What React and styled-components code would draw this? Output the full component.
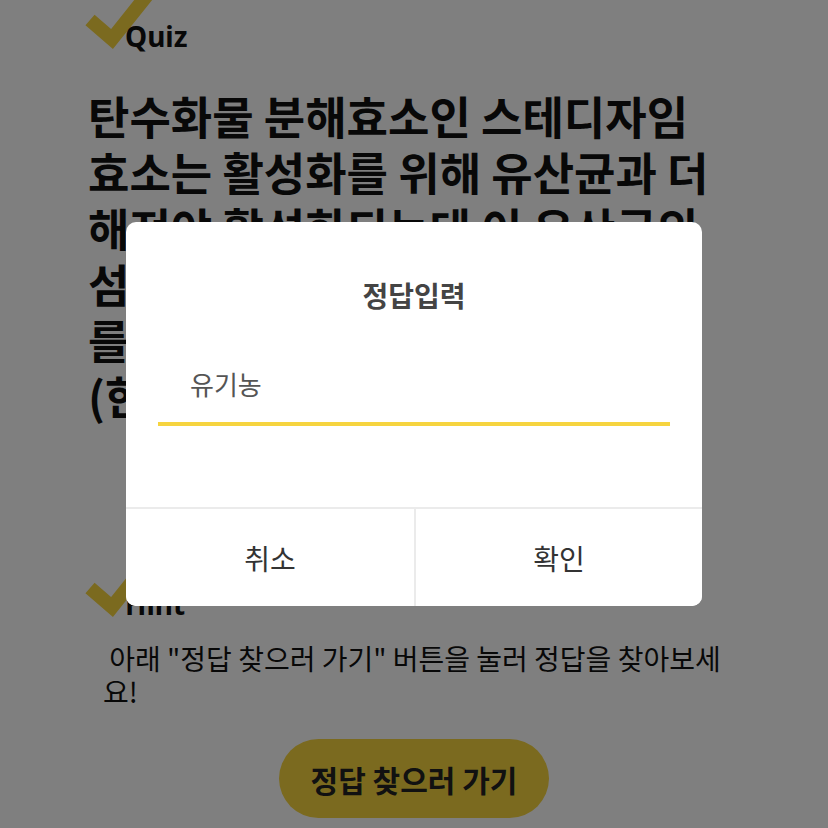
import React, { useState } from 'react';
import styled, { createGlobalStyle } from 'styled-components';

const GlobalStyle = createGlobalStyle`
  html, body {
    margin: 0;
    padding: 0;
    background: #ffffff;
    font-family: "Noto Sans", "Noto Sans CJK KR", sans-serif;
    overflow: hidden;
  }
`;

const yellow = '#f6d43f';

const Page = styled.div`
  width: 828px;
  height: 828px;
  overflow: hidden;
  position: relative;
  background: #fff;
`;

const Content = styled.div`
  padding: 0 103px 0 88px;
  display: flex;
  flex-direction: column;
`;

const SectionTitle = styled.div`
  position: relative;
  padding-left: 37px;
  margin-top: ${(p) => p.$top || 0}px;
  font-size: 28px;
  font-weight: 700;
  line-height: 32px;
  color: #111;

  span {
    position: relative;
  }
`;

const CheckMark = styled.svg`
  position: absolute;
  left: -3px;
  top: -42px;
  width: 72px;
  height: 72px;
  overflow: visible;
`;

const Question = styled.p`
  margin: 36px 0 0;
  font-family: "Noto Sans CJK KR", sans-serif;
  font-size: 45px;
  font-weight: 700;
  line-height: 56px;
  color: #111;
  word-break: break-all;
`;

const Hint = styled.p`
  margin: 22px 0 0 15px;
  font-family: "Noto Sans CJK KR", sans-serif;
  font-size: 28px;
  line-height: 33px;
  color: #111;
  white-space: pre-wrap;
  word-break: break-all;
`;

const FindButton = styled.button`
  align-self: center;
  margin: 31px 0 0 15px;
  width: 270px;
  height: 79px;
  border: none;
  border-radius: 40px;
  background: ${yellow};
  font-family: "Noto Sans CJK KR", sans-serif;
  font-size: 30px;
  font-weight: 700;
  color: #222;
`;

const Overlay = styled.div`
  position: absolute;
  inset: 0;
  background: rgba(0, 0, 0, 0.5);
  display: flex;
  align-items: flex-start;
  justify-content: center;
  padding-top: 222px;
`;

const Dialog = styled.div`
  width: 576px;
  height: 384px;
  background: #fff;
  border-radius: 10px;
  display: flex;
  flex-direction: column;
  overflow: hidden;
`;

const DialogTitle = styled.div`
  margin-top: 54px;
  text-align: center;
  font-family: "Noto Sans CJK KR", sans-serif;
  font-size: 28px;
  font-weight: 700;
  color: #444;
  line-height: 38px;
`;

const AnswerInput = styled.input`
  margin: 52px 32px 0;
  padding: 0 0 20px 32px;
  border: none;
  border-bottom: 4px solid ${yellow};
  outline: none;
  font-family: "Noto Sans CJK KR", sans-serif;
  font-size: 26px;
  line-height: 36px;
  color: #555;
  background: transparent;
`;

const ButtonRow = styled.div`
  margin-top: auto;
  height: 97px;
  border-top: 2px solid #ebebeb;
  display: grid;
  grid-template-columns: 1fr 1fr;
`;

const DialogButton = styled.button`
  border: none;
  background: #fff;
  border-left: ${(p) => (p.$divider ? '2px solid #ebebeb' : 'none')};
  font-family: "Noto Sans CJK KR", sans-serif;
  font-size: 28px;
  color: #333;
`;

const Check = () => (
  <CheckMark viewBox="0 0 72 72">
    <polyline
      points="5,42 27,61 63,16"
      fill="none"
      stroke={yellow}
      strokeWidth="14"
    />
  </CheckMark>
);

export default function App() {
  const [answer, setAnswer] = useState('유기농');

  return (
    <Page>
      <GlobalStyle />
      <Content>
        <SectionTitle $top={20}>
          <Check />
          <span>Quiz</span>
        </SectionTitle>
        <Question>
          탄수화물 분해효소인 스테디자임효소는 활성화를 위해 유산균과 더해져야 활성화되는데 이 유산균의 섬유질 먹이인 이것을 분해한물질를 무엇이라 부르는지 맞혀보세요 (한글 3글자)
        </Question>
        <SectionTitle $top={164}>
          <Check />
          <span>Hint</span>
        </SectionTitle>
        <Hint>{' 아래 "정답 찾으러 가기" 버튼을 눌러 정답을 찾아보세요!'}</Hint>
        <FindButton>정답 찾으러 가기</FindButton>
      </Content>
      <Overlay>
        <Dialog>
          <DialogTitle>정답입력</DialogTitle>
          <AnswerInput value={answer} onChange={(e) => setAnswer(e.target.value)} />
          <ButtonRow>
            <DialogButton>취소</DialogButton>
            <DialogButton $divider>확인</DialogButton>
          </ButtonRow>
        </Dialog>
      </Overlay>
    </Page>
  );
}
